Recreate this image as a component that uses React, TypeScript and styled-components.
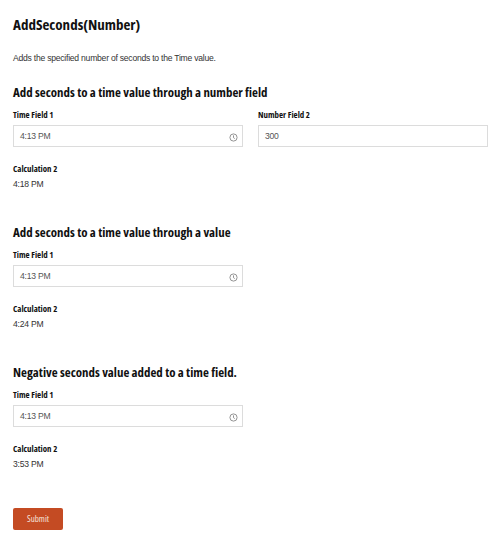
import React from "react";
import styled, { createGlobalStyle } from "styled-components";

const GlobalStyle = createGlobalStyle`
  html, body {
    margin: 0;
    background: #fff;
  }
  body {
    font-family: "Liberation Sans", Arial, sans-serif;
    color: #222;
  }
`;

const headingFont = `"Open Sans", "Noto Sans", sans-serif`;

const Page = styled.div`
  width: 500px;
  height: 543px;
  box-sizing: border-box;
  padding: 14px 13px 0;
  overflow: hidden;
`;

const Title = styled.h1`
  margin: 0;
  font: 700 15px/20px ${headingFont};
  font-stretch: 75%;
  color: #111;
`;

const Intro = styled.p`
  margin: 18px 0 0;
  font-size: 8.6px;
  letter-spacing: -0.24px;
  line-height: 12px;
  color: #333;
`;

const Section = styled.section<{ $gap: number }>`
  margin-top: ${(p) => p.$gap}px;
`;

const Heading = styled.h2`
  margin: 0 0 8px;
  font: 700 12.9px/18px ${headingFont};
  font-stretch: 75%;
  color: #111;
`;

const FieldRow = styled.div`
  display: grid;
  grid-template-columns: 230px 230px;
  column-gap: 15px;
`;

const Label = styled.div<{ $tight?: boolean }>`
  font: 700 8.9px/12px ${headingFont};
  font-stretch: 75%;
  color: #111;
  margin-bottom: ${(p) => (p.$tight ? 3 : 4)}px;
`;

const InputBox = styled.div`
  height: 22px;
  box-sizing: border-box;
  border: 1px solid #dcdcdc;
  display: flex;
  align-items: center;
  justify-content: space-between;
  padding: 0 4px 0 6px;
  font-size: 8.6px;
  letter-spacing: -0.24px;
  color: #555;
  background: #fff;
`;

const ClockIcon = styled.svg`
  width: 9px;
  height: 9px;
  margin-top: 2px;
  fill: none;
  stroke: #888;
  stroke-width: 1;
`;

const Calculation = styled.div`
  margin-top: 16px;
`;

const CalcValue = styled.div`
  font-size: 8.6px;
  letter-spacing: -0.24px;
  line-height: 12px;
  color: #333;
`;

const SubmitButton = styled.button`
  display: block;
  margin-top: 38px;
  width: 50px;
  height: 22px;
  border: none;
  border-radius: 2px;
  background: #c44b23;
  color: #f6e3dc;
  font: 400 9px/22px ${headingFont};
  font-stretch: 75%;
  padding: 0;
`;

function Clock() {
  return (
    <ClockIcon viewBox="0 0 10 10">
      <circle cx="5" cy="5" r="4" />
      <path d="M5 2.6V5.2L6.4 6.2" />
    </ClockIcon>
  );
}

function TimeField() {
  return (
    <div>
      <Label>Time Field 1</Label>
      <InputBox>
        4:13 PM
        <Clock />
      </InputBox>
    </div>
  );
}

function Result({ value }: { value: string }) {
  return (
    <Calculation>
      <Label $tight>Calculation 2</Label>
      <CalcValue>{value}</CalcValue>
    </Calculation>
  );
}

export default function App() {
  return (
    <Page>
      <GlobalStyle />
      <Title>AddSeconds(Number)</Title>
      <Intro>Adds the specified number of seconds to the Time value.</Intro>

      <Section $gap={19}>
        <Heading>Add seconds to a time value through a number field</Heading>
        <FieldRow>
          <TimeField />
          <div>
            <Label>Number Field 2</Label>
            <InputBox>300</InputBox>
          </div>
        </FieldRow>
        <Result value="4:18 PM" />
      </Section>

      <Section $gap={33}>
        <Heading>Add seconds to a time value through a value</Heading>
        <FieldRow>
          <TimeField />
        </FieldRow>
        <Result value="4:24 PM" />
      </Section>

      <Section $gap={33}>
        <Heading>Negative seconds value added to a time field.</Heading>
        <FieldRow>
          <TimeField />
        </FieldRow>
        <Result value="3:53 PM" />
      </Section>

      <SubmitButton>Submit</SubmitButton>
    </Page>
  );
}
